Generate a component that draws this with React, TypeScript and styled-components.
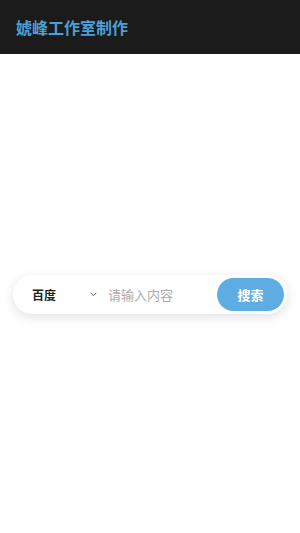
import React, { useState } from 'react';
import styled, { createGlobalStyle } from 'styled-components';

const GlobalStyle = createGlobalStyle`
    html, body {
        margin: 0;
        padding: 0;
        background: #ffffff;
        font-family: "Noto Sans CJK SC", "Noto Sans", sans-serif;
    }
`;

const Page = styled.div`
    width: 300px;
    height: 533px;
    display: flex;
    flex-direction: column;
`;

const Header = styled.header`
    height: 54px;
    background: #1b1b1b;
    display: flex;
    align-items: center;
    padding: 0 16px;
    box-sizing: border-box;
`;

const Title = styled.h1`
    margin: 0;
    font-size: 16px;
    font-weight: bold;
    color: #4d9fd6;
`;

const Main = styled.main`
    flex: 1;
    display: flex;
    justify-content: center;
    padding-top: 221px;
`;

const SearchBar = styled.div`
    width: 274px;
    height: 39px;
    border-radius: 20px;
    background: #fff;
    box-shadow: 0 3px 12px rgba(0, 0, 0, 0.12);
    display: flex;
    align-items: center;
    padding: 0 3px 0 19px;
    box-sizing: border-box;
`;

const Engine = styled.div`
    display: flex;
    align-items: center;
    justify-content: space-between;
    width: 65px;
    margin-right: 11px;
    font-size: 12px;
    font-weight: bold;
    color: #222;
`;

const Input = styled.input`
    flex: 1;
    min-width: 0;
    border: none;
    outline: none;
    padding: 0;
    font-size: 13px;
    font-family: inherit;
    color: #333;
    background: transparent;
    &::placeholder {
        color: #ababab;
    }
`;

const Button = styled.button`
    width: 67px;
    height: 33px;
    border: none;
    border-radius: 17px;
    background: #5dade2;
    color: #fff;
    font-size: 13px;
    font-weight: bold;
    font-family: inherit;
    cursor: pointer;
`;

const Chevron = () => (
    <svg width="7" height="5" viewBox="0 0 7 5" fill="none">
        <path d="M1 1.2l2.5 2.5 2.5-2.5" stroke="#555" strokeWidth="1" strokeLinecap="round" strokeLinejoin="round" />
    </svg>
);

const App = () => {
    const [query, setQuery] = useState('');
    return (
        <Page>
            <GlobalStyle />
            <Header>
                <Title>婋峰工作室制作</Title>
            </Header>
            <Main>
                <SearchBar>
                    <Engine>
                        <span>百度</span>
                        <Chevron />
                    </Engine>
                    <Input
                        placeholder="请输入内容"
                        value={query}
                        onChange={(e) => setQuery(e.target.value)}
                    />
                    <Button>搜索</Button>
                </SearchBar>
            </Main>
        </Page>
    );
};

export default App;
